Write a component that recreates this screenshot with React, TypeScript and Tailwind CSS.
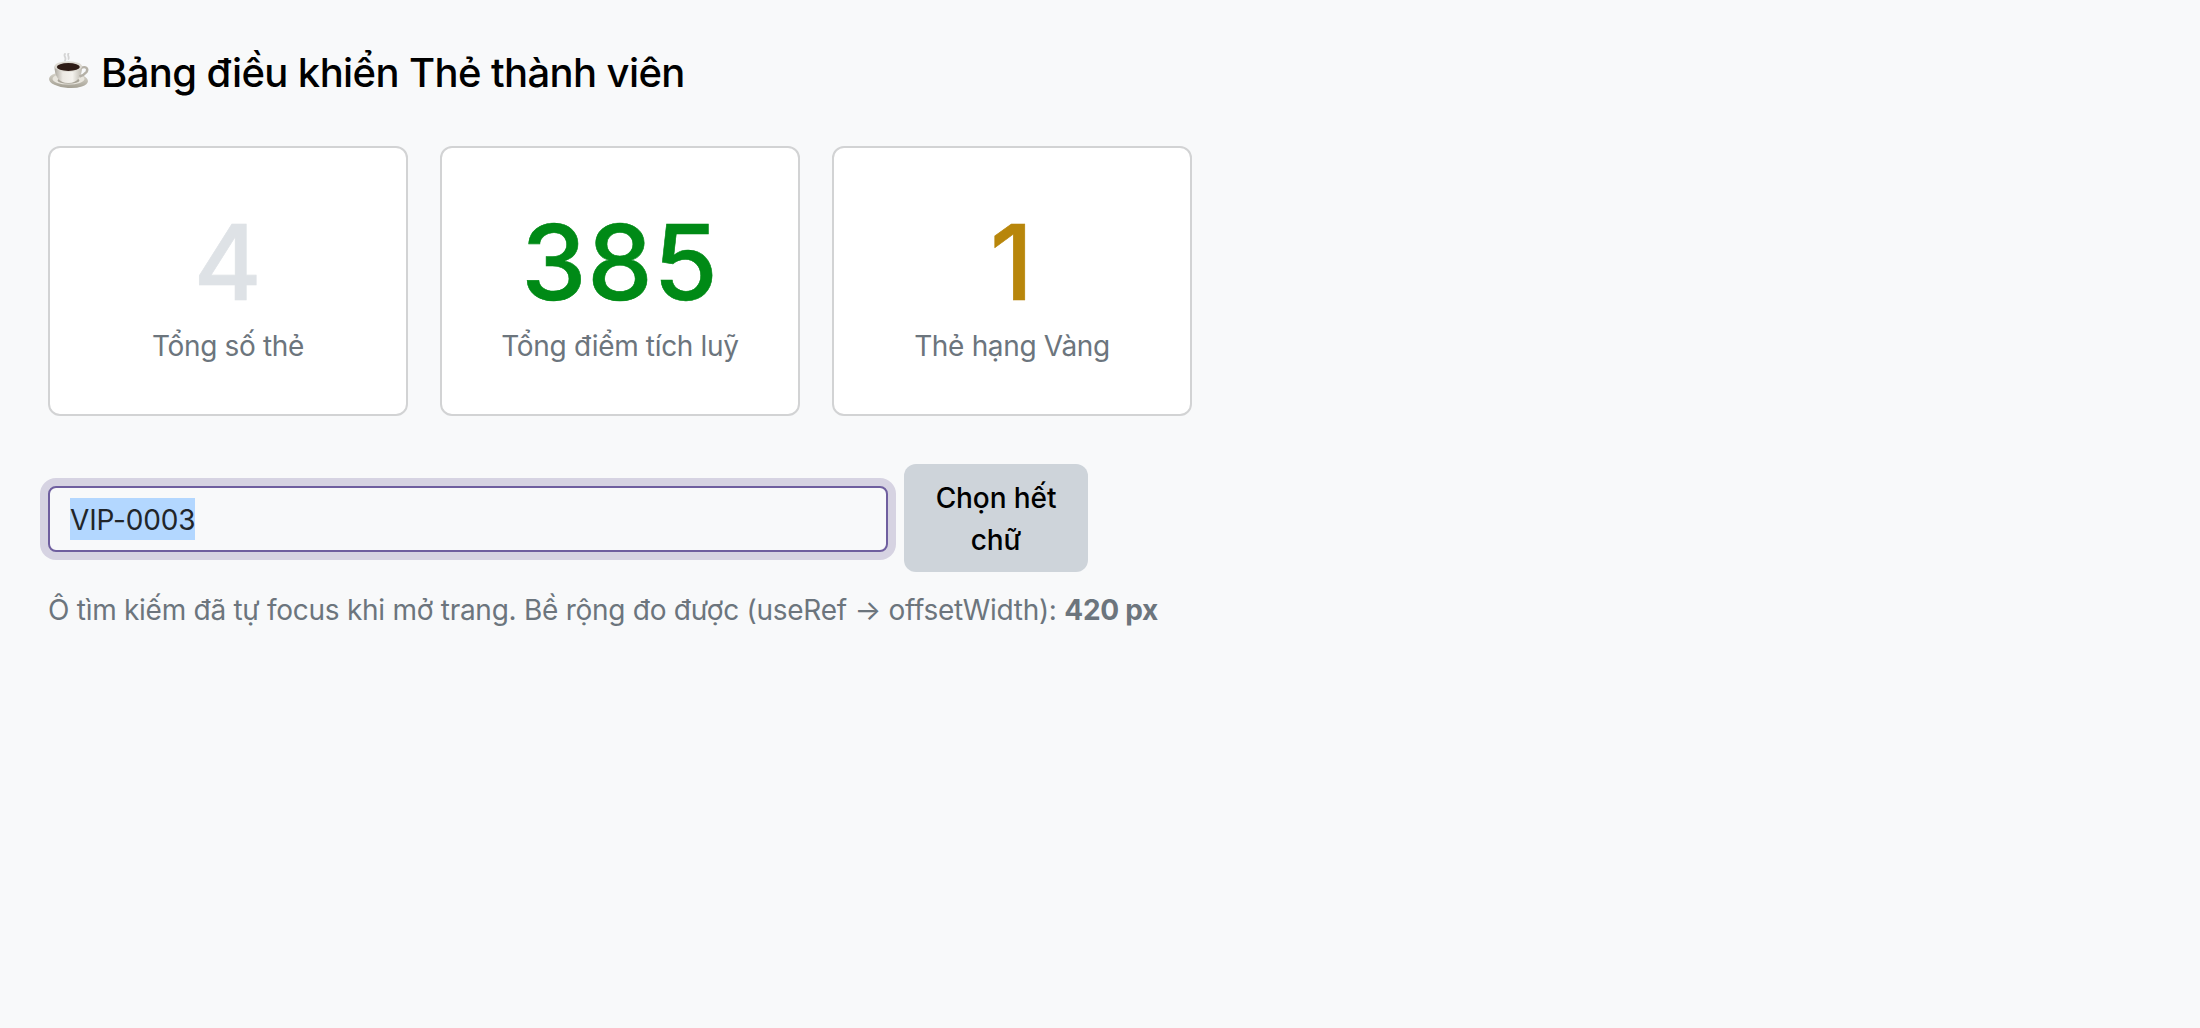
function CoffeeIcon() {
  return (
    <svg viewBox="0 0 44 40" className="h-[40px] w-[44px] shrink-0">
      <defs>
        <linearGradient id="cup" x1="0" y1="0" x2="1" y2="0">
          <stop offset="0" stopColor="#aaa69d" />
          <stop offset="0.3" stopColor="#ecE9e3" />
          <stop offset="0.65" stopColor="#f4f2ed" />
          <stop offset="1" stopColor="#bdb9af" />
        </linearGradient>
        <linearGradient id="saucer" x1="0" y1="0" x2="0" y2="1">
          <stop offset="0" stopColor="#dedbd2" />
          <stop offset="1" stopColor="#a39f92" />
        </linearGradient>
      </defs>
      <path d="M17 1c-2 2 2 3.500 0 6.500M20.500 0.500c-1.500 2 1 3 0 5.500" fill="none" stroke="#d4d4d4" strokeWidth="1.800" strokeLinecap="round" />
      <ellipse cx="20.500" cy="27" rx="19.500" ry="8" fill="url(#saucer)" transform="rotate(4 20.500 27)" />
      <ellipse cx="20.500" cy="26" rx="16" ry="5.500" fill="#e8e5dd" />
      <ellipse cx="20.500" cy="27.500" rx="11" ry="3.200" fill="#a8a498" />
      <path d="M6.500 13.500c0 9 4 16.500 13.800 16.500s13.800-7.500 13.800-16.500z" fill="url(#cup)" />
      <path d="M33 15c5-2.500 7.500 1 5.500 4-1.500 2-4 3.500-7 4.500" fill="none" stroke="#b5b1a7" strokeWidth="2.400" />
      <ellipse cx="20.300" cy="13.500" rx="13.800" ry="5.200" fill="#dcd9d1" />
      <ellipse cx="20.300" cy="14" rx="11.500" ry="3.900" fill="#2e1c16" />
    </svg>
  )
}

const STATS = [
  { value: '4', label: 'Tổng số thẻ', color: 'text-[#dee2e6]' },
  { value: '385', label: 'Tổng điểm tích luỹ', color: 'text-[#008a16]' },
  { value: '1', label: 'Thẻ hạng Vàng', color: 'text-[#b8860b]' },
]

export default function App() {
  return (
    <div className="min-h-screen bg-[#f8f9fa] p-12 font-['Inter',sans-serif] text-black">
      <h1 className="flex items-center gap-[9px] pt-[1px] text-[40px] font-medium leading-[48px] tracking-[-0.6px]">
        <CoffeeIcon />
        <span>Bảng điều khiển Thẻ thành viên</span>
      </h1>

      <div className="mt-[49px] flex gap-8">
        {STATS.map((s) => (
          <div key={s.label} className="flex h-[270px] w-[360px] flex-col items-center rounded-xl border-2 border-[#d2d3d4] bg-white pt-[52px]">
            <div className={`text-[104px] font-medium leading-[124px] tracking-[0.8px] [-webkit-text-stroke:0.6px_currentColor] ${s.color}`}>{s.value}</div>
            <div className="mt-[5px] text-[28px] leading-[34px] tracking-[-0.33px] text-[#6c757d]">{s.label}</div>
          </div>
        ))}
      </div>

      <div className="mt-12 flex items-center gap-4">
        <div className="mt-[2px] flex h-[66px] w-[840px] items-center rounded-lg border-2 border-[#6f5f9f] bg-[#f8f9fa] px-5 text-[28px] tracking-[-0.15px] text-[#212529] ring-8 ring-[#d6d3e2]">
          <span className="inline-block h-[42px] bg-[#b3d7ff] leading-[44px]">VIP-0003</span>
        </div>
        <button className="h-[108px] w-[184px] rounded-xl bg-[#ced4da] px-6 pt-[1px] text-[28px] font-medium leading-[42px] tracking-[-0.1px] text-black">
          Chọn hết chữ
        </button>
      </div>

      <p className="mt-[17px] text-[28px] leading-[42px] tracking-[-0.27px] text-[#6c757d]">
        Ô tìm kiếm đã tự focus khi mở trang. Bề rộng đo được (useRef → offsetWidth): <strong className="font-bold">420 px</strong>
      </p>
    </div>
  )
}
